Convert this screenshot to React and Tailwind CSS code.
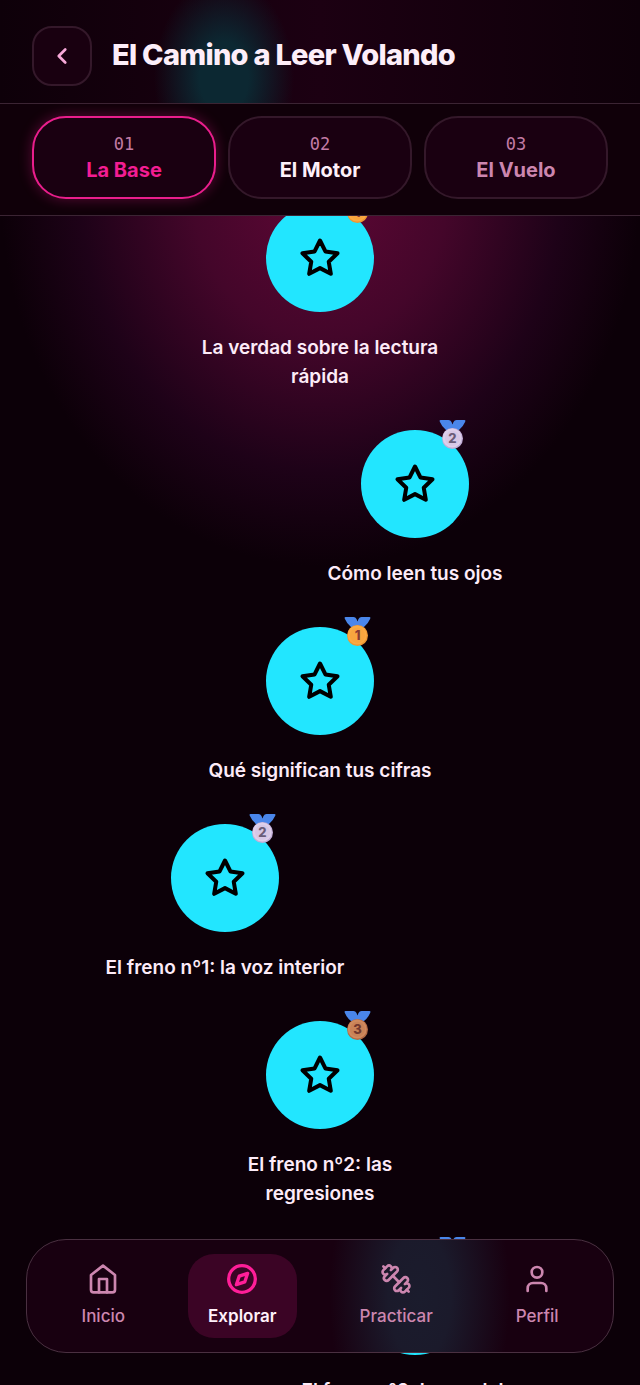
import { ChevronLeft, User } from "lucide-react";
import { FiCompass, FiHome, FiStar } from "react-icons/fi";

const stages = [
  { number: "01", name: "La Base", active: true },
  { number: "02", name: "El Motor", color: "text-[#fff0fa]" },
  { number: "03", name: "El Vuelo", color: "text-[#cc86af]" },
];

const lessons = [
  { title: "La verdad sobre la lectura rápida", medal: 1, shift: "" },
  { title: "Cómo leen tus ojos", medal: 2, shift: "ml-[190px]" },
  { title: "Qué significan tus cifras", medal: 1, shift: "" },
  { title: "El freno nº1: la voz interior", medal: 2, shift: "mr-[190px]" },
  { title: "El freno nº2: las regresiones", medal: 3, shift: "" },
  { title: "El freno nº3: leer palabra a\u00a0palabra", medal: 2, shift: "ml-[190px]" },
];

const medalColors = {
  1: { rim: "#ee9733", face: "#fbaa43", digit: "#8a3b33" },
  2: { rim: "#c3aed8", face: "#decfea", digit: "#6b5c78" },
  3: { rim: "#b26a45", face: "#d08a5e", digit: "#73382e" },
};

const DumbbellIcon = ({ className }) => (
  <svg
    className={className}
    viewBox="0 0 24 24"
    fill="none"
    stroke="currentColor"
    strokeWidth="2"
    strokeLinecap="round"
    strokeLinejoin="round"
  >
    <path d="M14.4 14.4 9.6 9.6" />
    <path d="M18.657 21.485a2 2 0 1 1-2.829-2.828l-1.767 1.768a2 2 0 1 1-2.829-2.829l6.364-6.364a2 2 0 1 1 2.829 2.829l-1.768 1.767a2 2 0 1 1 2.828 2.829z" />
    <path d="m21.5 21.5-1.4-1.4" />
    <path d="M3.9 3.9 2.5 2.5" />
    <path d="M6.404 12.768a2 2 0 1 1-2.829-2.829l1.768-1.767a2 2 0 1 1-2.828-2.829l2.828-2.828a2 2 0 1 1 2.829 2.828l1.767-1.768a2 2 0 1 1 2.829 2.829z" />
  </svg>
);

const tabs = [
  { name: "Inicio", Icon: FiHome },
  { name: "Explorar", Icon: FiCompass, active: true },
  { name: "Practicar", Icon: DumbbellIcon },
  { name: "Perfil", Icon: User },
];

const Medal = ({ place }) => {
  const { rim, face, digit } = medalColors[place];
  return (
    <svg
      className="absolute -top-[10px] right-[3px] w-[27px] h-[31px]"
      viewBox="0 0 27 31"
      role="img"
      aria-label={`Medalla ${place}`}
    >
      <path
        d="M1.500 0H9.500Q11.500 0 12.500 2L13.500 4.500L14.500 2Q15.500 0 17.500 0H25.500Q27 0 26.200 1.800Q24 7 20 10H7Q3 7 .8 1.800Q0 0 1.500 0Z"
        fill="#4a86ea"
      />
      <circle cx="13.500" cy="18.500" r="10.500" fill={rim} />
      <circle cx="13.200" cy="18" r="9.500" fill={face} />
      <circle cx="13.500" cy="18.200" r="7.500" fill={rim} fillOpacity=".25" />
      <text
        x="13.500"
        y="23"
        textAnchor="middle"
        fontSize="13"
        fontWeight="800"
        fontFamily="Inter, sans-serif"
        fill={digit}
      >
        {place}
      </text>
    </svg>
  );
};

const Lesson = ({ title, medal, shift }) => {
  return (
    <li className={`flex justify-center ${shift}`}>
      <button className="flex flex-col items-center gap-[21px] w-60">
        <span className="relative flex items-center justify-center w-[108px] h-[108px] rounded-full bg-[#22e6ff]">
          <FiStar className="w-[42px] h-[42px] text-black" strokeWidth={2.3} />
          <Medal place={medal} />
        </span>
        <span className="text-[19px] leading-[29px] font-semibold text-[#fdebf8]">
          {title}
        </span>
      </button>
    </li>
  );
};

const App = () => {
  return (
    <div className="relative flex flex-col h-screen overflow-hidden bg-[#0c0008] font-['Inter',sans-serif]">
      <header className="flex items-center gap-5 px-8 pt-[26px] pb-[17px] border-b border-[#3b2433] bg-[radial-gradient(ellipse_70px_100px_at_35%_75%,#0c2832_0%,#0c2832_35%,transparent_100%),linear-gradient(90deg,#0e0009,#1c0012_50%,#0e0009)]">
        <button
          aria-label="Volver"
          className="flex items-center justify-center w-[60px] h-[60px] rounded-[20px] border-2 border-[#34182a] bg-[#190010]"
        >
          <ChevronLeft
            className="w-[26px] h-[26px] text-[#f7a8d8]"
            strokeWidth={2.5}
          />
        </button>
        <h1 className="pb-0.5 text-[29px] leading-9 font-extrabold tracking-tight text-[#fdeef9]">
          El Camino a Leer Volando
        </h1>
      </header>

      <div className="grid grid-cols-3 gap-3 px-8 pt-3 pb-4 border-b border-[#3b2433] bg-[#100009]">
        {stages.map(({ number, name, active, color }) => (
          <button
            key={number}
            className={`flex flex-col items-center justify-center h-[83px] rounded-[34px] border-2 bg-[#1a0011] ${
              active
                ? "border-[#e91e8c] shadow-[0_0_14px_#e91e8c55]"
                : "border-[#34182a]"
            }`}
          >
            <span className="font-['DejaVu_Sans_Mono',monospace] text-[17px] leading-6 text-[#c27ba5]">
              {number}
            </span>
            <span
              className={`text-xl leading-7 font-bold ${active ? "text-[#f31d93]" : color}`}
            >
              {name}
            </span>
          </button>
        ))}
      </div>

      <main className="flex-1 min-h-0 overflow-hidden bg-[radial-gradient(ellipse_320px_380px_at_50%_-30px,#5f0735_0%,#44062a_40%,#1e0218_75%,#0c0008_100%)]">
        <ul className="-mt-3 flex flex-col gap-[39px]">
          {lessons.map((lesson) => (
            <Lesson key={lesson.title} {...lesson} />
          ))}
        </ul>
      </main>

      <nav className="absolute bottom-8 inset-x-[26px] flex justify-around h-[114px] px-[13px] py-[14px] rounded-[40px] border border-[#4a3041] bg-[#180010] bg-[radial-gradient(ellipse_90px_180px_at_67%_50%,#1b1c2d_0%,#1b1a2b_35%,transparent_100%)]">
        {tabs.map(({ name, Icon, active }) => (
          <a
            key={name}
            href="#"
            className={`flex flex-col items-center pt-[9px] gap-[5px] px-5 rounded-[26px] text-[17px] leading-8 ${
              active
                ? "bg-[#3b0425] font-semibold text-[#fff0fa]"
                : "font-medium text-[#cc86af]"
            }`}
          >
            <Icon
              className={`w-8 h-8 ${active ? "text-[#ff1e98] stroke-[2.5]" : ""}`}
            />
            {name}
          </a>
        ))}
      </nav>
    </div>
  );
};

export default App;
